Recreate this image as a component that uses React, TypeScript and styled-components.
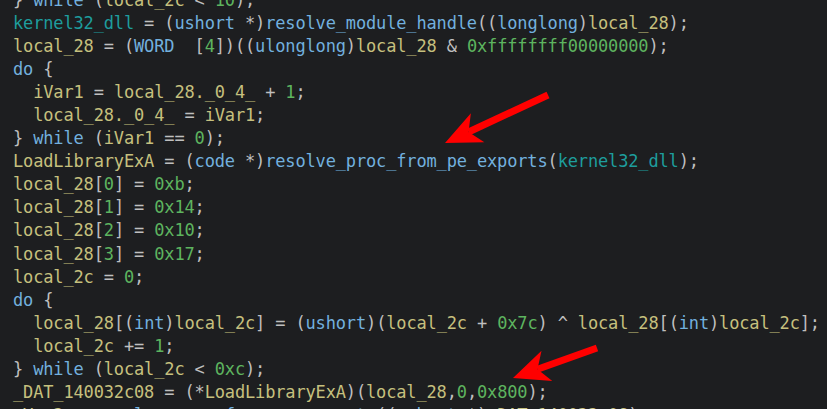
import React from "react";
import styled, { createGlobalStyle } from "styled-components";

type Kind = "var" | "fn" | "kw" | "num" | "param" | "punc";
type Token = [Kind, string];

const GlobalStyle = createGlobalStyle`
  html, body {
    margin: 0;
    padding: 0;
    background: #1d1e20;
  }
  #root {
    width: 827px;
    height: 409px;
  }
`;

const colors: Record<Kind, string> = {
  var: "#c6c07e",
  fn: "#72b0de",
  kw: "#72b0de",
  num: "#5db45f",
  param: "#1e9d9d",
  punc: "#bfbfbf",
};

const Viewport = styled.div`
  position: relative;
  width: 827px;
  height: 409px;
  overflow: hidden;
  background: #1d1e20;
`;

const Listing = styled.pre`
  margin: -11px 0 0 0;
  padding: 0 0 0 13px;
  font-family: "DejaVu Sans Mono", "Liberation Mono", monospace;
  font-size: 17px;
  letter-spacing: -0.15px;
  line-height: 23.05px;
  white-space: pre;
`;

const Line = styled.div<{ $indent: number }>`
  height: 23.05px;
  padding-left: ${(p) => p.$indent * 20.2}px;
`;

const Tok = styled.span<{ $kind: Kind }>`
  color: ${(p) => colors[p.$kind]};
`;

const Overlay = styled.svg`
  position: absolute;
  left: 0;
  top: 0;
  pointer-events: none;
`;

const P = (s: string): Token => ["punc", s];
const V = (s: string): Token => ["var", s];
const F = (s: string): Token => ["fn", s];
const K = (s: string): Token => ["kw", s];
const N = (s: string): Token => ["num", s];
const A = (s: string): Token => ["param", s];

const lines: { indent: number; tokens: Token[] }[] = [
  { indent: 0, tokens: [P("} "), K("while"), P(" ("), V("local_2c"), P(" < "), N("10"), P(");")] },
  {
    indent: 0,
    tokens: [
      A("kernel32_dll"),
      P(" = ("),
      K("ushort"),
      P(" *)"),
      F("resolve_module_handle"),
      P("(("),
      K("longlong"),
      P(")"),
      V("local_28"),
      P(");"),
    ],
  },
  {
    indent: 0,
    tokens: [
      V("local_28"),
      P(" = ("),
      K("WORD"),
      P("  ["),
      N("4"),
      P("])(("),
      K("ulonglong"),
      P(")"),
      V("local_28"),
      P(" & "),
      N("0xffffffff00000000"),
      P(");"),
    ],
  },
  { indent: 0, tokens: [K("do"), P(" {")] },
  { indent: 1, tokens: [V("iVar1"), P(" = "), V("local_28._0_4_"), P(" + "), N("1"), P(";")] },
  { indent: 1, tokens: [V("local_28._0_4_"), P(" = "), V("iVar1"), P(";")] },
  { indent: 0, tokens: [P("} "), K("while"), P(" ("), V("iVar1"), P(" == "), N("0"), P(");")] },
  {
    indent: 0,
    tokens: [
      V("LoadLibraryExA"),
      P(" = ("),
      K("code"),
      P(" *)"),
      F("resolve_proc_from_pe_exports"),
      P("("),
      A("kernel32_dll"),
      P(");"),
    ],
  },
  { indent: 0, tokens: [V("local_28"), P("["), N("0"), P("] = "), N("0xb"), P(";")] },
  { indent: 0, tokens: [V("local_28"), P("["), N("1"), P("] = "), N("0x14"), P(";")] },
  { indent: 0, tokens: [V("local_28"), P("["), N("2"), P("] = "), N("0x10"), P(";")] },
  { indent: 0, tokens: [V("local_28"), P("["), N("3"), P("] = "), N("0x17"), P(";")] },
  { indent: 0, tokens: [V("local_2c"), P(" = "), N("0"), P(";")] },
  { indent: 0, tokens: [K("do"), P(" {")] },
  {
    indent: 1,
    tokens: [
      V("local_28"),
      P("[("),
      K("int"),
      P(")"),
      V("local_2c"),
      P("] = ("),
      K("ushort"),
      P(")("),
      V("local_2c"),
      P(" + "),
      N("0x7c"),
      P(") ^ "),
      V("local_28"),
      P("[("),
      K("int"),
      P(")"),
      V("local_2c"),
      P("];"),
    ],
  },
  { indent: 1, tokens: [V("local_2c"), P(" += "), N("1"), P(";")] },
  { indent: 0, tokens: [P("} "), K("while"), P(" ("), V("local_2c"), P(" < "), N("0xc"), P(");")] },
  {
    indent: 0,
    tokens: [
      V("_DAT_140032c08"),
      P(" = (*"),
      V("LoadLibraryExA"),
      P(")("),
      V("local_28"),
      P(","),
      N("0"),
      P(","),
      N("0x800"),
      P(");"),
    ],
  },
  {
    indent: 0,
    tokens: [
      V("uVar2"),
      P(" = "),
      F("resolve_proc_from_pe_exports"),
      P("(("),
      K("ushort"),
      P(" *)"),
      V("_DAT_140032c08"),
      P(");"),
    ],
  },
];

function Arrow({ x1, y1, x2, y2 }: { x1: number; y1: number; x2: number; y2: number }) {
  const dx = x2 - x1;
  const dy = y2 - y1;
  const len = Math.hypot(dx, dy);
  const ux = dx / len;
  const uy = dy / len;
  const headLen = 36;
  const headW = 16;
  const bx = x2 - ux * headLen;
  const by = y2 - uy * headLen;
  const nx = -uy;
  const ny = ux;
  const inner = x2 - ux * (headLen - 10);
  const innerY = y2 - uy * (headLen - 10);
  return (
    <g fill="#ff0000" stroke="none">
      <line x1={x1} y1={y1} x2={inner} y2={innerY} stroke="#ff0000" strokeWidth={7} />
      <polygon
        points={`${x2},${y2} ${bx + nx * headW},${by + ny * headW} ${inner},${innerY} ${bx - nx * headW},${by - ny * headW}`}
      />
    </g>
  );
}

export default function App() {
  return (
    <>
      <GlobalStyle />
      <Viewport>
        <Listing>
          {lines.map((line, i) => (
            <Line key={i} $indent={line.indent}>
              {line.tokens.map(([kind, text], j) => (
                <Tok key={j} $kind={kind}>
                  {text}
                </Tok>
              ))}
            </Line>
          ))}
        </Listing>
        <Overlay width={827} height={409} viewBox="0 0 827 409">
          <Arrow x1={548} y1={95} x2={445} y2={143} />
          <Arrow x1={597} y1={348} x2={513} y2={378} />
        </Overlay>
      </Viewport>
    </>
  );
}
